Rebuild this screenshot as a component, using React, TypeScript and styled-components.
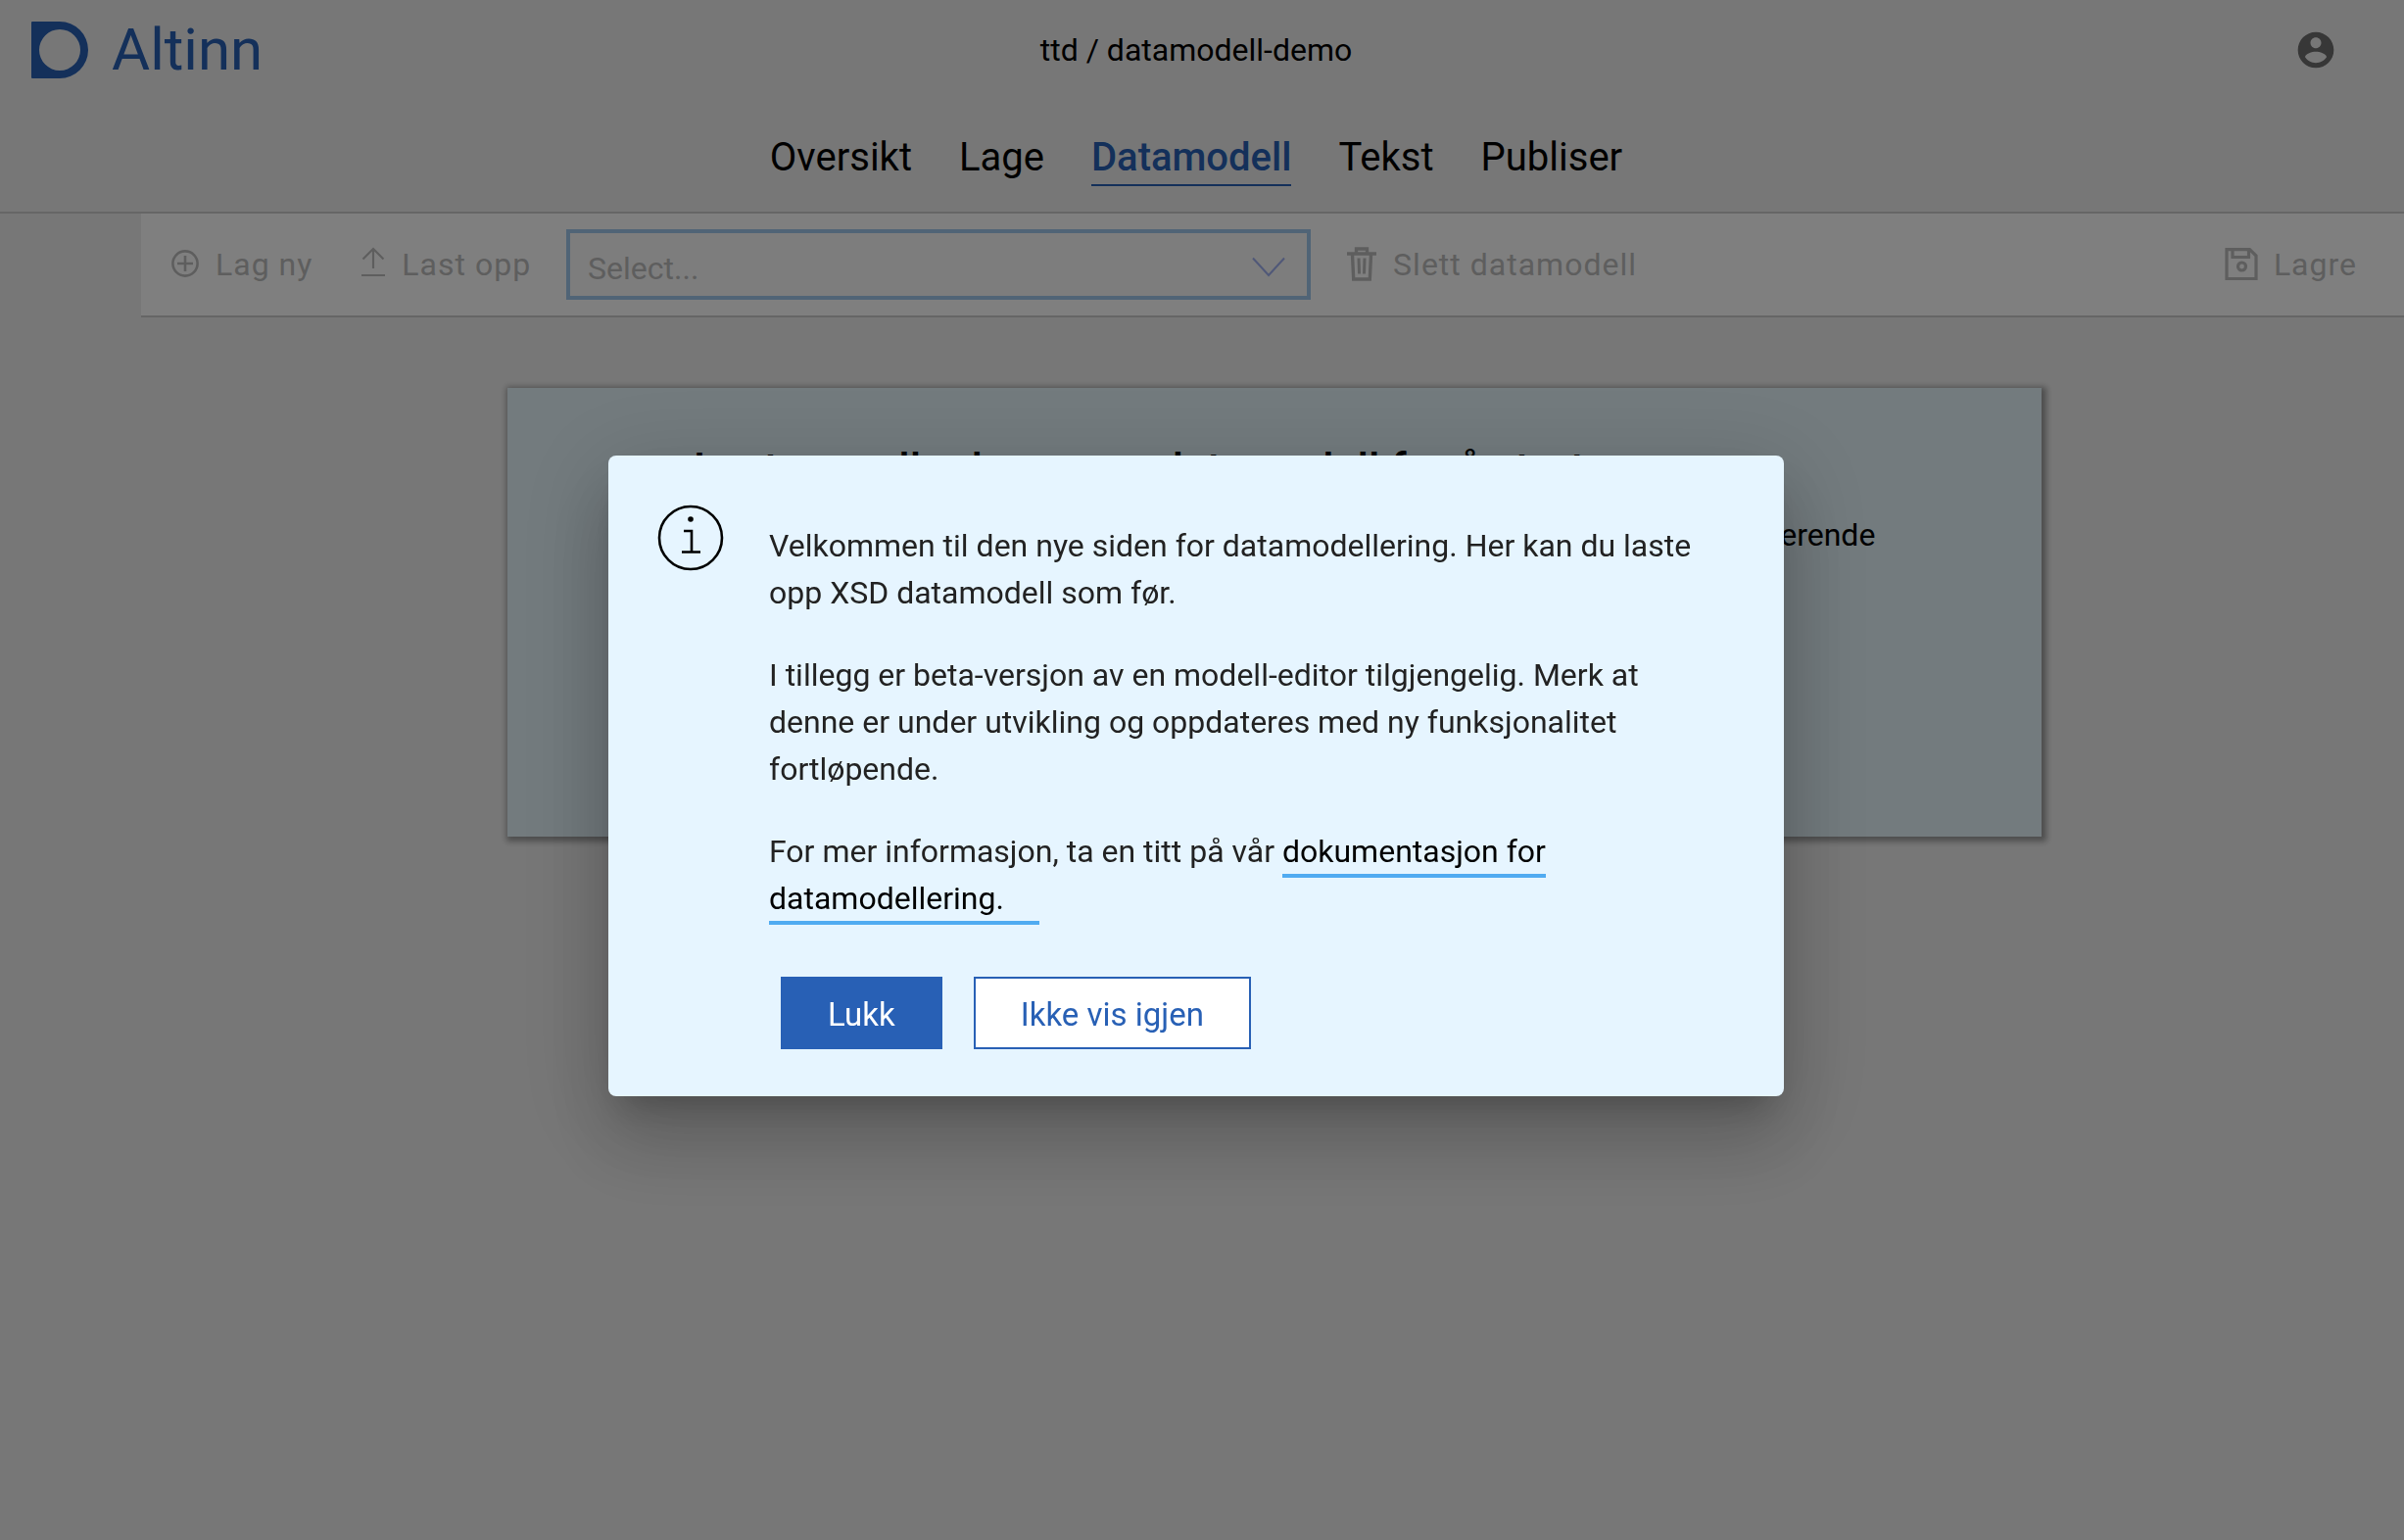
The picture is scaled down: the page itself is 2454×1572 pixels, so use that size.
import React from 'react';
import styled, { createGlobalStyle } from 'styled-components';

const GlobalStyle = createGlobalStyle`
  *, *::before, *::after { box-sizing: border-box; }
  body {
    margin: 0;
    background: #efefef;
    color: #000;
    font-family: Roboto, "Liberation Sans", sans-serif;
    font-size: 32px;
    line-height: 48px;
  }
  h1, h2, p { margin: 0; }
  button, select { font: inherit; }
`;

const Page = styled.div`
  min-height: 100vh;
`;

const Header = styled.header`
  height: 218px;
  border-bottom: 2px solid #ccc;
`;

const TopBar = styled.div`
  display: grid;
  grid-template-columns: 1fr auto 1fr;
  align-items: center;
  height: 102px;
  padding: 0 44px 0 32px;
`;

const Brand = styled.a`
  display: flex;
  align-items: center;
  gap: 24px;
  color: #2860b5;
  font-size: 60px;
  text-decoration: none;
`;

const AppName = styled.h1`
  font-size: 32px;
  font-weight: 400;
`;

const ProfileButton = styled.button`
  justify-self: end;
  display: flex;
  margin-right: 24px;
  padding: 0;
  border: 0;
  background: none;
  color: #6e6e6e;
`;

const Nav = styled.nav`
  display: flex;
  justify-content: center;
  gap: 48px;
  padding: 35px 12px 0 0;
`;

const NavLink = styled.a<{ $active?: boolean }>`
  padding-bottom: 3px;
  border-bottom: 2px solid ${(p) => (p.$active ? '#2860b5' : 'transparent')};
  color: ${(p) => (p.$active ? '#2860b5' : '#000')};
  font-size: 40px;
  font-weight: ${(p) => (p.$active ? 500 : 400)};
  text-decoration: none;
`;

const Main = styled.main`
  margin-left: 144px;
`;

const Toolbar = styled.div`
  display: flex;
  align-items: center;
  height: 106px;
  padding: 0 48px 0 30px;
  border-bottom: 2px solid #ccc;
  background: #fff;
`;

const ToolButton = styled.button`
  display: flex;
  align-items: center;
  gap: 16px;
  padding: 0;
  border: 0;
  background: none;
  color: #bdbdbd;
  letter-spacing: 1px;
`;

const CreateActions = styled.div`
  display: flex;
  gap: 49px;
  margin-right: 36px;
`;

const SelectBox = styled.div`
  display: grid;
  align-items: center;
  width: 760px;
  height: 72px;
  margin-right: 36px;
  border: 4px solid #a0c8ec;
  background: #fafafa;

  > * { grid-area: 1 / 1; }
  > svg { justify-self: end; margin: 6px 22px 0 0; pointer-events: none; }
`;

const ModelSelect = styled.select`
  appearance: none;
  width: 100%;
  height: 100%;
  padding: 7px 18px 0;
  border: 0;
  outline: 0;
  background: transparent;
  color: #bdbdbd;
  opacity: 1;
`;

const SaveSlot = styled.div`
  margin-left: auto;
`;

const Content = styled.div`
  display: flex;
  justify-content: center;
  padding: 72px 0 0 4px;
`;

const LandingCard = styled.section`
  width: 68%;
  max-width: 1566px;
  min-height: 458px;
  padding: 59px 160px 48px 190px;
  background: #e6f6fc;
  box-shadow: 2px 2px 6px 3px rgba(0, 0, 0, 0.35);
`;

const CardTitle = styled.h2`
  margin-bottom: 19px;
  font-size: 45px;
  font-weight: 500;
`;

const Overlay = styled.div`
  position: fixed;
  inset: 0;
  display: flex;
  align-items: center;
  justify-content: center;
  padding: 12px 12px 0 0;
  background: rgba(0, 0, 0, 0.5);
`;

const Dialog = styled.div`
  display: flex;
  gap: 46px;
  width: 1200px;
  padding: 50px 60px 48px 50px;
  border-radius: 8px;
  background: #e6f5ff;
  color: #222;
  box-shadow:
    0 22px 30px -14px rgba(0, 0, 0, 0.2),
    0 48px 76px 6px rgba(0, 0, 0, 0.14),
    0 18px 92px 16px rgba(0, 0, 0, 0.12);

  > svg { flex: none; }
`;

const DialogBody = styled.div`
  display: flex;
  flex-direction: column;
  gap: 36px;
  padding-top: 18px;
`;

const DocLink = styled.a`
  padding-right: 36px;
  padding-bottom: 4px;
  border-bottom: 4px solid #50abf1;
  color: #000;
  text-decoration: none;
`;

const DialogActions = styled.div`
  display: flex;
  gap: 32px;
  padding: 20px 12px 0;
`;

const DialogButton = styled.button<{ $primary?: boolean }>`
  height: 74px;
  padding: 3px 46px 0;
  border: 2px solid #2860b5;
  background: ${(p) => (p.$primary ? '#2860b5' : '#fff')};
  color: ${(p) => (p.$primary ? '#fff' : '#2860b5')};
  font-size: 33px;
`;

const AltinnMark = () => (
  <svg width="58" height="58" viewBox="0 0 58 58" aria-hidden="true">
    <path
      fill="currentColor"
      fillRule="evenodd"
      d="M1 0H29a29 29 0 0 1 0 58H1a1 1 0 0 1-1-1V1a1 1 0 0 1 1-1ZM29 8a21 21 0 1 0 0 42 21 21 0 0 0 0-42Z"
    />
  </svg>
);

const ProfileIcon = () => (
  <svg width="44" height="44" viewBox="0 0 24 24" aria-hidden="true">
    <path
      fill="currentColor"
      d="M12 2C6.48 2 2 6.48 2 12s4.48 10 10 10 10-4.48 10-10S17.52 2 12 2zm0 3c1.66 0 3 1.34 3 3s-1.34 3-3 3-3-1.34-3-3 1.34-3 3-3zm0 14.2c-2.5 0-4.71-1.28-6-3.22.03-1.99 4-3.08 6-3.08 1.99 0 5.97 1.09 6 3.08-1.29 1.94-3.5 3.22-6 3.22z"
    />
  </svg>
);

const AddIcon = () => (
  <svg width="30" height="30" viewBox="0 0 30 30" fill="none" stroke="currentColor" strokeWidth="2.6" aria-hidden="true">
    <circle cx="15" cy="14" r="12.6" />
    <path d="M15 6v16M7 14h16" />
  </svg>
);

const UploadIcon = () => (
  <svg width="26" height="38" viewBox="0 0 26 38" fill="none" stroke="currentColor" strokeWidth="2.2" aria-hidden="true">
    <path d="M13 23V3M2.500 13.500 13 3l10.500 10.500M1 30h24" />
  </svg>
);

const TrashIcon = () => (
  <svg width="32" height="38" viewBox="0 0 32 38" fill="none" stroke="currentColor" strokeWidth="3.4" aria-hidden="true">
    <path d="M1 8h30M10.500 8V3h11V8M6.500 9l1.200 25h16.600L25.500 9" />
    <path d="M13 12.500l.5 16M19 12.500l-.5 16" strokeWidth="3" />
  </svg>
);

const SaveIcon = () => (
  <svg width="34" height="34" viewBox="0 0 34 34" fill="none" stroke="currentColor" strokeWidth="3.2" aria-hidden="true">
    <path d="M2 1.600h23.500L32 8v23.500H2z" />
    <path d="M8 2v7.500h16.500V2" />
    <circle cx="17.500" cy="19" r="4" />
  </svg>
);

const ChevronIcon = () => (
  <svg width="34" height="22" viewBox="0 0 34 22" fill="none" stroke="#a0b0f0" strokeWidth="2" aria-hidden="true">
    <path d="M1 1.500 17 19 33 1.500" />
  </svg>
);

const InfoIcon = () => (
  <svg width="68" height="68" viewBox="0 0 68 68" fill="none" stroke="#000" strokeWidth="2.600" aria-hidden="true">
    <circle cx="34" cy="34" r="32" />
    <path d="M27 27h8v21M25 48.500h19" />
    <circle cx="34" cy="15" r="2.800" fill="#000" stroke="none" />
  </svg>
);

const navItems = ['Oversikt', 'Lage', 'Datamodell', 'Tekst', 'Publiser'];

export default function App() {
  return (
    <Page>
      <GlobalStyle />
      <Header>
        <TopBar>
          <Brand href="#">
            <AltinnMark />
            Altinn
          </Brand>
          <AppName>ttd / datamodell-demo</AppName>
          <ProfileButton type="button" aria-label="Profil">
            <ProfileIcon />
          </ProfileButton>
        </TopBar>
        <Nav>
          {navItems.map((item) => (
            <NavLink key={item} href="#" $active={item === 'Datamodell'}>
              {item}
            </NavLink>
          ))}
        </Nav>
      </Header>
      <Main>
        <Toolbar>
          <CreateActions>
            <ToolButton type="button" disabled>
              <AddIcon />
              Lag ny
            </ToolButton>
            <ToolButton type="button" disabled>
              <UploadIcon />
              Last opp
            </ToolButton>
          </CreateActions>
          <SelectBox>
            <ModelSelect aria-label="Datamodell" disabled defaultValue="">
              <option value="">Select...</option>
            </ModelSelect>
            <ChevronIcon />
          </SelectBox>
          <ToolButton type="button" disabled>
            <TrashIcon />
            Slett datamodell
          </ToolButton>
          <SaveSlot>
            <ToolButton type="button" disabled>
              <SaveIcon />
              Lagre
            </ToolButton>
          </SaveSlot>
        </Toolbar>
        <Content>
          <LandingCard>
            <CardTitle>Last opp eller lag en ny datamodell for å starte</CardTitle>
            <p>
              Du kan laste opp en modell, lage en helt ny modell eller velge mellom de eksisterende
              datamodellene.
            </p>
          </LandingCard>
        </Content>
      </Main>
      <Overlay>
        <Dialog role="dialog" aria-modal="true" aria-label="Datamodellering">
          <InfoIcon />
          <DialogBody>
            <p>Velkommen til den nye siden for datamodellering. Her kan du laste opp XSD datamodell som før.</p>
            <p>
              I tillegg er beta-versjon av en modell-editor tilgjengelig. Merk at denne er under utvikling og
              oppdateres med ny funksjonalitet fortløpende.
            </p>
            <p>
              For mer informasjon, ta en titt på vår <DocLink href="#">dokumentasjon for datamodellering.</DocLink>
            </p>
            <DialogActions>
              <DialogButton type="button" $primary>
                Lukk
              </DialogButton>
              <DialogButton type="button">Ikke vis igjen</DialogButton>
            </DialogActions>
          </DialogBody>
        </Dialog>
      </Overlay>
    </Page>
  );
}
